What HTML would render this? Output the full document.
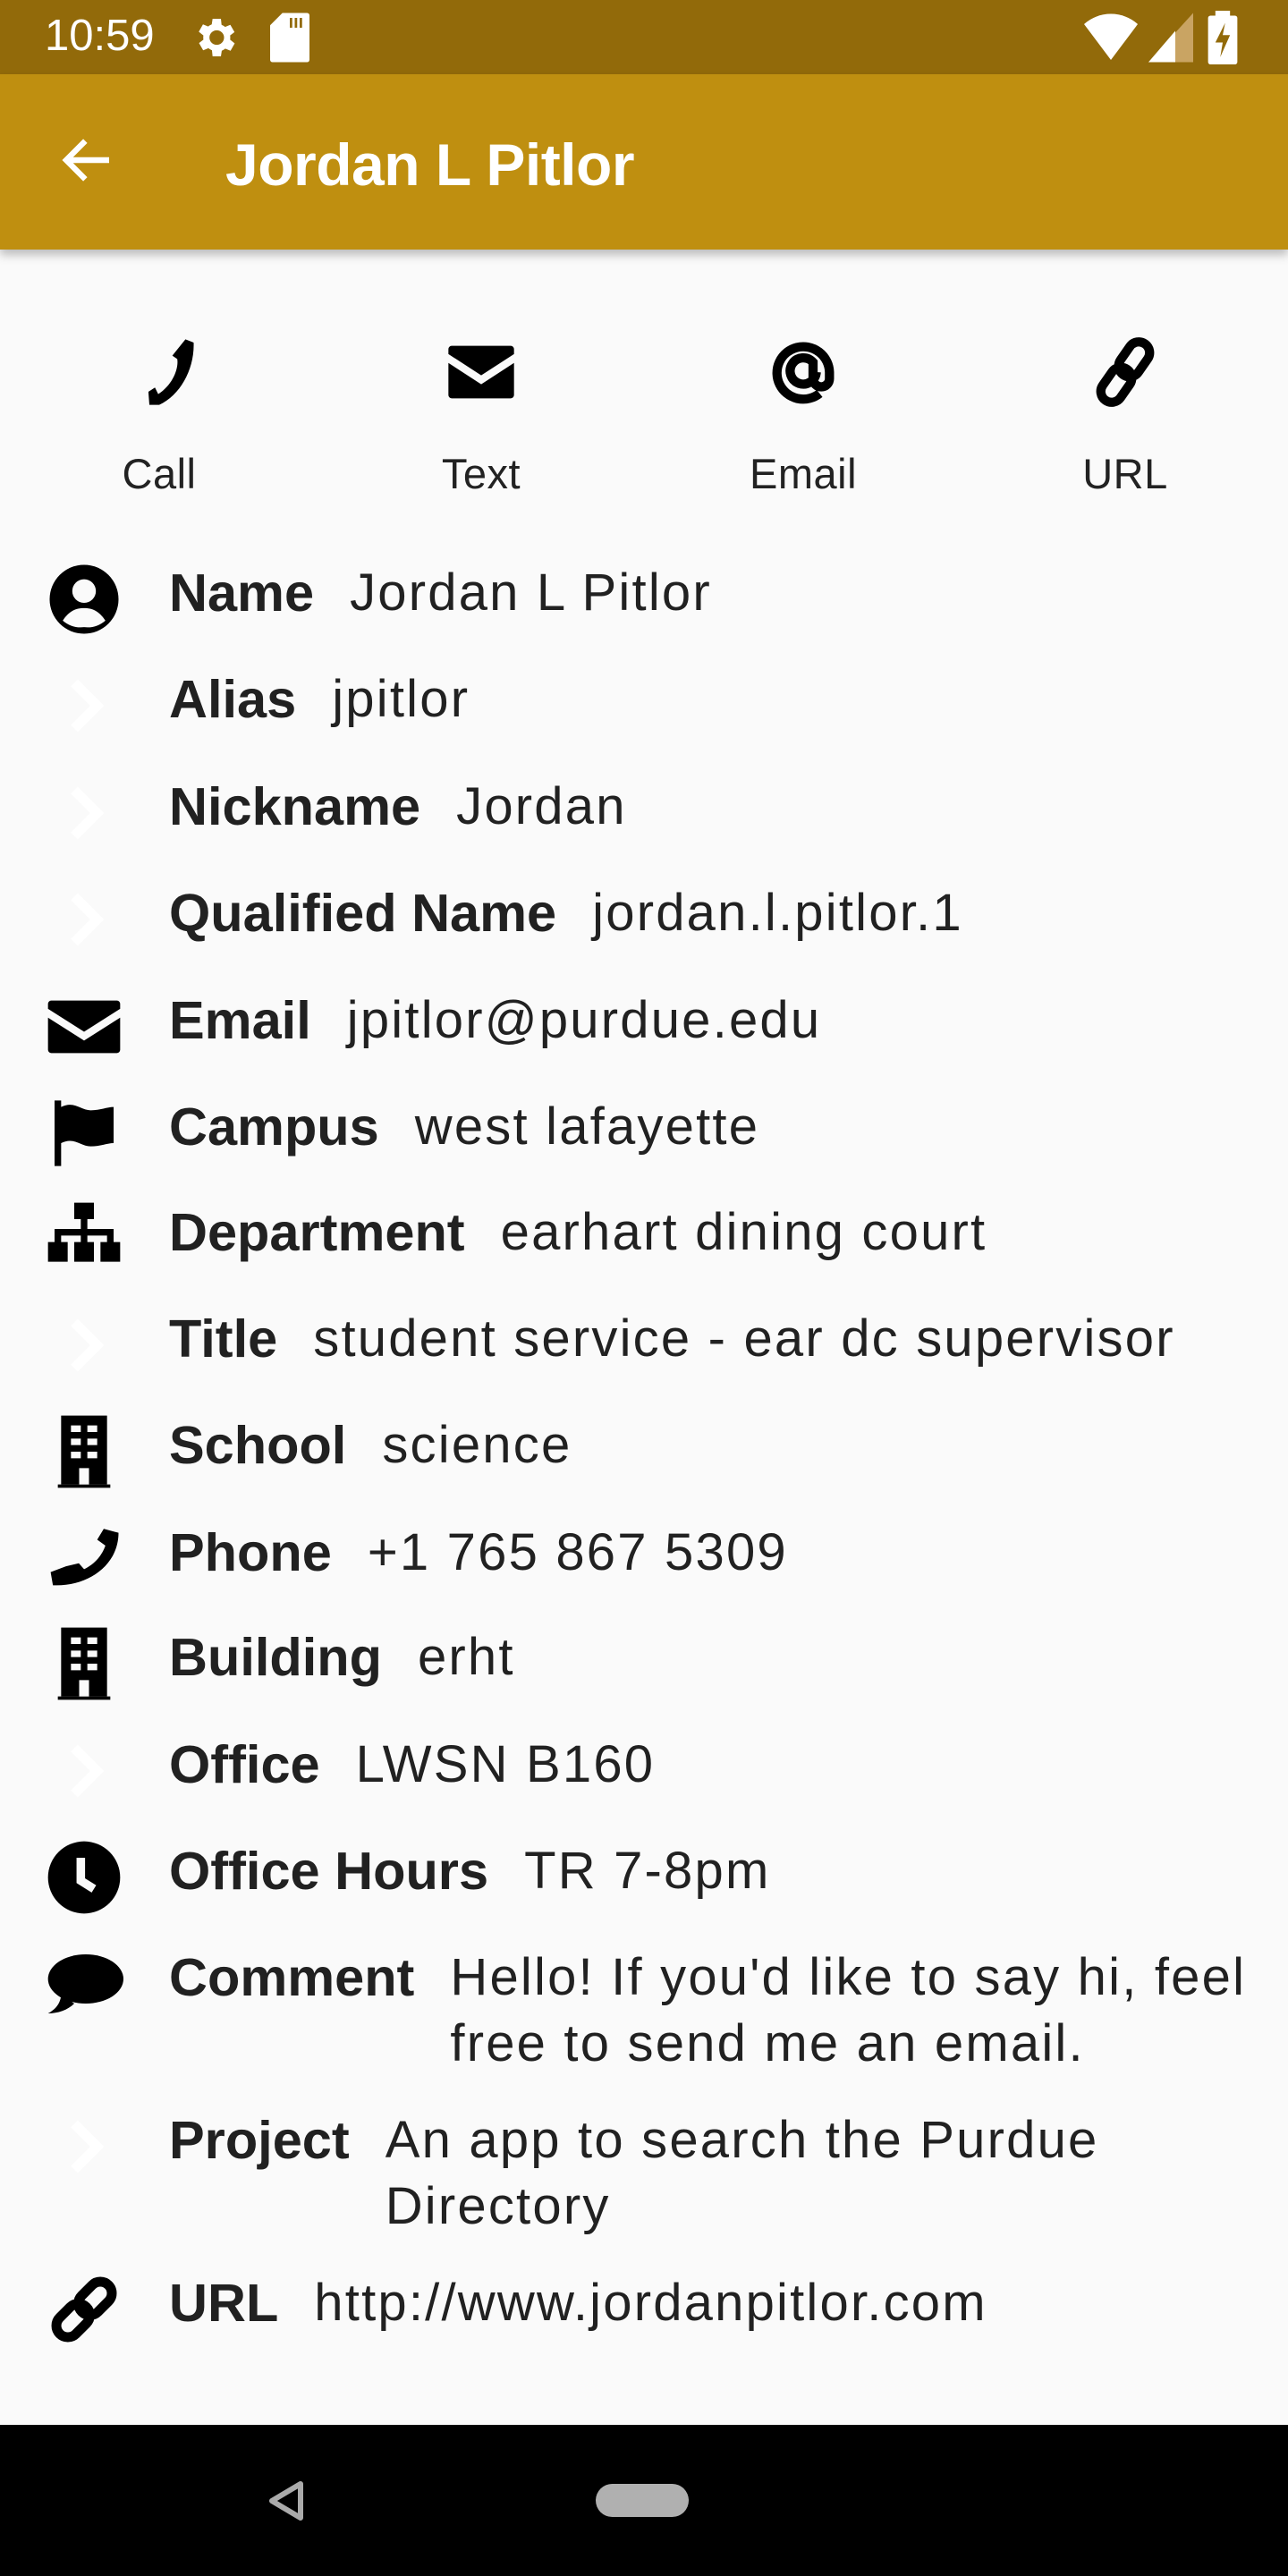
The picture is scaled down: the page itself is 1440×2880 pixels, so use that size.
<!DOCTYPE html>
<html><head><meta charset="utf-8"><style>
*{margin:0;padding:0;box-sizing:border-box}
body{width:1440px;height:2880px;background:#fafafa;font-family:"Liberation Sans",sans-serif;position:relative;overflow:hidden;color:#212121}
.sb{position:absolute;left:0;top:0;width:1440px;height:83px;background:#926a0a}
.ab{position:absolute;left:0;top:83px;width:1440px;height:196px;background:#bf8f10;box-shadow:0 6px 10px rgba(0,0,0,.25)}
.t{position:absolute;color:#fff}
.act{position:absolute;top:372px;width:200px;text-align:center}
.act svg{display:block;margin:0 auto;width:88px;height:88px}
.act div{font-size:47px;color:#222;margin-top:42px;letter-spacing:0.5px}
.row{position:absolute;left:0;width:1440px}
.row svg{position:absolute;left:50px;width:88px;height:88px}
.row .tx{position:absolute;left:189px;font-size:58px;line-height:74px;display:flex;white-space:nowrap}
.row b{margin-right:40px;font-size:59.5px}
.row .tx>span,.row .tx{letter-spacing:2.2px}
.row b{letter-spacing:0}
.nav{position:absolute;left:0;top:2711px;width:1440px;height:169px;background:#000}
</style></head><body>
<div class="sb">
 <div class="t" style="left:50px;top:12px;font-size:49px">10:59</div>
 <svg style="position:absolute;left:212px;top:14px" width="56" height="56" viewBox="0 0 24 24"><path fill="#fff" d="M19.4 13a7.5 7.5 0 000-2l2.1-1.6-2-3.5-2.5 1a7 7 0 00-1.7-1L15 3h-4l-.4 2.7a7 7 0 00-1.7 1l-2.5-1-2 3.5L6.6 11a7.5 7.5 0 000 2l-2.1 1.6 2 3.5 2.5-1a7 7 0 001.7 1L11 21h4l.4-2.7a7 7 0 001.7-1l2.5 1 2-3.5zM13 15.5a3.5 3.5 0 110-7 3.5 3.5 0 010 7z"/></svg>
 <svg style="position:absolute;left:302px;top:14px" width="44" height="56" viewBox="0 0 16 20"><path fill="#fff" d="M5 0h10a1 1 0 011 1v18a1 1 0 01-1 1H1a1 1 0 01-1-1V5z"/><path fill="#926a0a" d="M8 2h1v4H8zM10 2h1v4h-1zM12 2h1v4h-1z"/></svg>
 <svg style="position:absolute;left:1212px;top:14px" width="60" height="56" viewBox="0 0 24 22"><path fill="#fff" d="M12 21L0 5a18 18 0 0124 0z"/></svg>
 <svg style="position:absolute;left:1284px;top:14px" width="50" height="56" viewBox="0 0 20 22"><path fill="#c9a463" d="M20 0v22H0z"/><path fill="#fff" d="M12 8v14H0z"/></svg>
 <svg style="position:absolute;left:1350px;top:12px" width="34" height="60" viewBox="0 0 12 22"><path fill="#fff" d="M3 0h6v2h2a1 1 0 011 1v18a1 1 0 01-1 1H1a1 1 0 01-1-1V3a1 1 0 011-1h2z"/><path fill="#926a0a" d="M7 5L3 13h3l-1 6 4-9H6z"/></svg>
</div>
<div class="ab">
 <svg style="position:absolute;left:66px;top:64px" width="64" height="64" viewBox="0 0 24 24"><path fill="none" stroke="#fff" stroke-width="2.4" d="M21 12H4M11 4l-8 8 8 8"/></svg>
 <div class="t" style="left:252px;top:63px;font-size:66px;font-weight:bold;letter-spacing:-0.5px">Jordan L Pitlor</div>
</div>

<div class="act" style="left:78px"><svg viewBox="0 0 24 24"><path d="M20 2l2.5 1c.3 8-4 16-10.5 19H9l-.3-4 2-1.3 1 2C16 16 18 11 17.5 8L16 7z"/></svg><div>Call</div></div>
<div class="act" style="left:438px"><svg viewBox="0 0 24 24"><path d="M2 5a1 1 0 011-1h18a1 1 0 011 1v1.5l-10 6.5L2 6.5zM2 9.2l10 6.5 10-6.5V19a1 1 0 01-1 1H3a1 1 0 01-1-1z"/></svg><div>Text</div></div>
<div class="act" style="left:798px"><svg viewBox="0 0 24 24"><path fill="none" stroke="#000" stroke-width="2.8" d="M16 12a4 4 0 11-1-3v5a2.5 2.5 0 005 0v-2a8 8 0 10-3 6.5"/></svg><div>Email</div></div>
<div class="act" style="left:1158px"><svg viewBox="0 0 24 24"><g transform="rotate(35 12 12)" fill="none" stroke="#000" stroke-width="2.8"><rect x="8.7" y="1.5" width="6.6" height="11.5" rx="3.3"/><rect x="8.7" y="11" width="6.6" height="11.5" rx="3.3"/></g></svg><div>URL</div></div>

<!-- rows -->
<div class="row" style="top:626px"><svg viewBox="0 0 24 24"><circle cx="12" cy="12" r="10.5"/><circle cx="12" cy="9.5" r="3.6" fill="#fafafa"/><path fill="#fafafa" d="M5.5 18.5c2-3 4-3.8 6.5-3.8s4.5.8 6.5 3.8A8.5 8.5 0 0112 20.5a8.5 8.5 0 01-6.5-2z"/></svg><div class="tx"><b>Name</b>Jordan L Pitlor</div></div>
<div class="row" style="top:745px"><svg viewBox="0 0 24 24"><path fill="none" stroke="#fff" stroke-width="3" d="M9 5l7 7-7 7"/></svg><div class="tx"><b>Alias</b>jpitlor</div></div>
<div class="row" style="top:865px"><svg viewBox="0 0 24 24"><path fill="none" stroke="#fff" stroke-width="3" d="M9 5l7 7-7 7"/></svg><div class="tx"><b>Nickname</b>Jordan</div></div>
<div class="row" style="top:984px"><svg viewBox="0 0 24 24"><path fill="none" stroke="#fff" stroke-width="3" d="M9 5l7 7-7 7"/></svg><div class="tx"><b>Qualified Name</b>jordan.l.pitlor.1</div></div>
<div class="row" style="top:1104px"><svg viewBox="0 0 24 24"><path d="M1 5a1 1 0 011-1h20a1 1 0 011 1v1.5l-11 7-11-7zM1 9.2l11 7 11-7V19a1 1 0 01-1 1H2a1 1 0 01-1-1z"/></svg><div class="tx"><b>Email</b>jpitlor@purdue.edu</div></div>
<div class="row" style="top:1223px"><svg viewBox="0 0 24 24"><path d="M3 2h2v20H3zM5 4c4-2 6 1 9 1s5-1 7-1v11c-2 0-4 1-7 1s-5-3-9-1z"/></svg><div class="tx"><b>Campus</b>west lafayette</div></div>
<div class="row" style="top:1341px"><svg viewBox="0 0 24 24"><path d="M9 1h6v5H9zM11 6h2v3h8v4h-2v-2h-6v2h-2v-2H5v2H3V9h8zM1 13h6v6H1zM9 13h6v6H9zM17 13h6v6h-6z"/></svg><div class="tx"><b>Department</b>earhart dining court</div></div>
<div class="row" style="top:1460px"><svg viewBox="0 0 24 24"><path fill="none" stroke="#fff" stroke-width="3" d="M9 5l7 7-7 7"/></svg><div class="tx"><b>Title</b>student service - ear dc supervisor</div></div>
<div class="row" style="top:1579px"><svg viewBox="0 0 24 24"><path d="M5 1h14v21H5z"/><path d="M4 22h16v1H4z"/><g fill="#fafafa"><path d="M8 4h3v2H8zM13 4h3v2h-3zM8 8h3v2H8zM13 8h3v2h-3zM8 12h3v2H8zM13 12h3v2h-3zM10.5 17h3v5h-3z"/></g></svg><div class="tx"><b>School</b>science</div></div>
<div class="row" style="top:1699px"><svg viewBox="0 0 24 24"><path d="M22.5 4l-4.5-1.2-2 3.3 2.5 1.8c-1 2.8-3 5.5-6.5 7.2l-1.6-1.8-3.9.9L1.8 16l.7 4C13 20.5 22.5 14 22.5 4z"/></svg><div class="tx"><b>Phone</b>+1 765 867 5309</div></div>
<div class="row" style="top:1816px"><svg viewBox="0 0 24 24"><path d="M5 1h14v21H5z"/><path d="M4 22h16v1H4z"/><g fill="#fafafa"><path d="M8 4h3v2H8zM13 4h3v2h-3zM8 8h3v2H8zM13 8h3v2h-3zM8 12h3v2H8zM13 12h3v2h-3zM10.5 17h3v5h-3z"/></g></svg><div class="tx"><b>Building</b>erht</div></div>
<div class="row" style="top:1936px"><svg viewBox="0 0 24 24"><path fill="none" stroke="#fff" stroke-width="3" d="M9 5l7 7-7 7"/></svg><div class="tx"><b>Office</b>LWSN B160</div></div>
<div class="row" style="top:2055px"><svg viewBox="0 0 24 24"><circle cx="12" cy="12" r="11"/><path fill="none" stroke="#fafafa" stroke-width="2.6" d="M11 6v7l4 2.5"/></svg><div class="tx"><b>Office Hours</b>TR 7-8pm</div></div>
<div class="row" style="top:2174px"><svg viewBox="0 0 24 24"><ellipse cx="12.5" cy="10.5" rx="11.5" ry="7.5"/><path d="M5 15c0 3-2 5-4 6 3 0 6-1 8-3z"/></svg><div class="tx"><b>Comment</b><span style="white-space:normal;width:900px">Hello! If you'd like to say hi, feel free to send me an email.</span></div></div>
<div class="row" style="top:2356px"><svg viewBox="0 0 24 24"><path fill="none" stroke="#fff" stroke-width="3" d="M9 5l7 7-7 7"/></svg><div class="tx"><b>Project</b><span style="white-space:normal;width:850px">An app to search the Purdue Directory</span></div></div>
<div class="row" style="top:2538px"><svg viewBox="0 0 24 24"><g transform="rotate(45 12 12)" fill="none" stroke="#000" stroke-width="3"><rect x="8.5" y="1.5" width="7" height="11.5" rx="3.5"/><rect x="8.5" y="11" width="7" height="11.5" rx="3.5"/></g></svg><div class="tx"><b>URL</b>http://www.jordanpitlor.com</div></div>

<div class="nav">
 <svg style="position:absolute;left:298px;top:62px" width="44" height="46" viewBox="0 0 22 23"><path fill="none" stroke="#aaa" stroke-width="3" stroke-linejoin="round" d="M19 2v19L3 11.5z"/></svg>
 <div style="position:absolute;left:666px;top:66px;width:104px;height:37px;border-radius:19px;background:#b0b0b0"></div>
</div>
</body></html>
